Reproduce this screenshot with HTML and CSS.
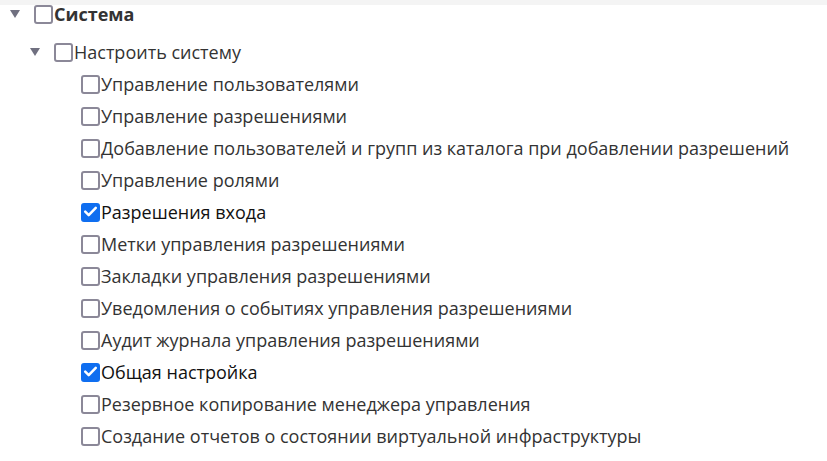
FILE: index.html
```html
<!DOCTYPE html>
<html lang="ru">
<head>
  <meta charset="UTF-8">
  <title>Привилегии</title>
  <link rel="stylesheet" href="styles.css">
</head>
<body>
  <div class="topbar"></div>
  <ul class="tree">
    <li>
      <div class="row root">
        <span class="toggle"></span>
        <span class="box"></span>
        <span class="label">Система</span>
      </div>
      <ul class="children">
        <li>
          <div class="row">
            <span class="toggle"></span>
            <span class="box"></span>
            <span class="label">Настроить систему</span>
          </div>
          <ul class="leaves">
            <li class="row leaf"><span class="box"></span><span class="label">Управление пользователями</span></li>
            <li class="row leaf"><span class="box"></span><span class="label">Управление разрешениями</span></li>
            <li class="row leaf"><span class="box"></span><span class="label">Добавление пользователей и групп из каталога при добавлении разрешений</span></li>
            <li class="row leaf"><span class="box"></span><span class="label">Управление ролями</span></li>
            <li class="row leaf checked"><span class="box"><svg viewBox="0 0 18 18"><path d="M4 9.2l3.3 3.3L14 5.5" /></svg></span><span class="label">Разрешения входа</span></li>
            <li class="row leaf"><span class="box"></span><span class="label">Метки управления разрешениями</span></li>
            <li class="row leaf"><span class="box"></span><span class="label">Закладки управления разрешениями</span></li>
            <li class="row leaf"><span class="box"></span><span class="label">Уведомления о событиях управления разрешениями</span></li>
            <li class="row leaf"><span class="box"></span><span class="label">Аудит журнала управления разрешениями</span></li>
            <li class="row leaf checked"><span class="box"><svg viewBox="0 0 18 18"><path d="M4 9.2l3.3 3.3L14 5.5" /></svg></span><span class="label">Общая настройка</span></li>
            <li class="row leaf"><span class="box"></span><span class="label">Резервное копирование менеджера управления</span></li>
            <li class="row leaf"><span class="box"></span><span class="label">Создание отчетов о состоянии виртуальной инфраструктуры</span></li>
          </ul>
        </li>
      </ul>
    </li>
  </ul>
</body>
</html>
```

FILE: styles.css
```css
body { margin: 0; background: #fff; font-family: "Open Sans", "Noto Sans", sans-serif; font-size: 18px; color: #333; }
.topbar { position: fixed; top: 0; left: 0; right: 0; height: 5px; background: #f4f4f4; z-index: 2; }
ul { list-style: none; margin: 0; padding: 0; }
.tree { padding-left: 10px; margin-top: -2px; }
.row { display: flex; align-items: center; height: 32px; }
.root .label { font-weight: bold; }
.children { padding-left: 20px; margin-top: 6px; }
.leaves { padding-left: 51px; }
.toggle { width: 0; height: 0; border-left: 5.5px solid transparent; border-right: 5.5px solid transparent; border-top: 8px solid #707080; margin-right: 14px; }
.box { box-sizing: border-box; width: 19px; height: 19px; border: 2.5px solid #8b8898; border-radius: 3px; flex: none; display: flex; margin-right: 1px; }
.box svg { width: 100%; height: 100%; fill: none; stroke: #fff; stroke-width: 2.4; stroke-linecap: round; stroke-linejoin: round; }
.checked .box { background: #0f6ef0; border-color: #0f6ef0; }
.checked .box svg { margin: -2.5px; width: 19px; height: 19px; flex: none; }
.checked .label { color: #111; }
.label { white-space: nowrap; }
```
